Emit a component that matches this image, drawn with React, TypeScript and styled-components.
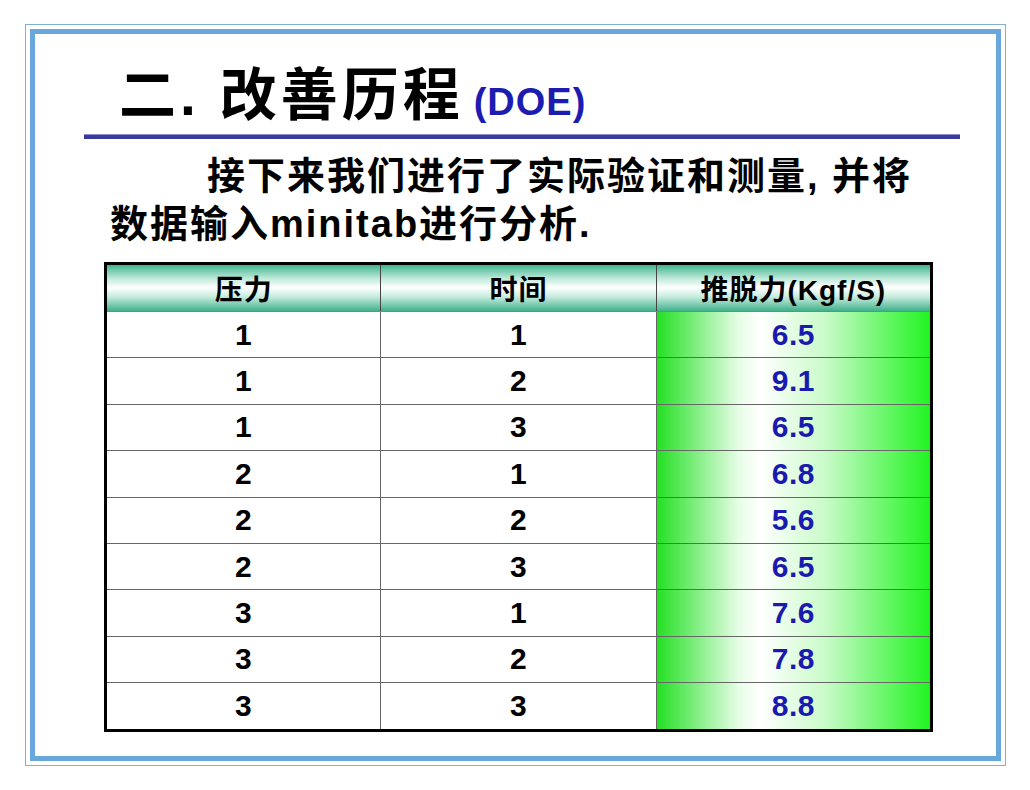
import styled, { createGlobalStyle } from "styled-components";

const GlobalStyle = createGlobalStyle`
  html, body {
    margin: 0;
    padding: 0;
    background: #ffffff;
  }
  body {
    font-family: "Liberation Sans", "Noto Sans CJK SC", sans-serif;
    color: #000;
  }
`;

const Slide = styled.div`
  width: 1030px;
  height: 790px;
  box-sizing: border-box;
  padding: 24px 24px 0 25px;
`;

const OuterFrame = styled.div`
  border: 1px solid #7fb2cf;
  padding: 4px;
  height: 742px;
  box-sizing: border-box;
`;

const InnerFrame = styled.div`
  border: 5px solid #68a8dc;
  height: 100%;
  box-sizing: border-box;
  padding: 29px 0 0 49px;
`;

const Header = styled.div`
  width: 876px;
`;

const Title = styled.h1`
  margin: 0;
  padding-left: 35px;
  height: 64px;
  line-height: 64px;
  font-size: 57px;
  font-weight: 700;
  letter-spacing: 4px;
  white-space: nowrap;
`;

const Tag = styled.span`
  font-size: 38px;
  color: #1c1cb0;
  letter-spacing: 1px;
  margin-left: 10px;
`;

const Rule = styled.div`
  margin-top: 7px;
  height: 5px;
  border-top: 1px solid #8c8cd6;
  background: #3a3a98;
  box-sizing: border-box;
`;

const Intro = styled.p`
  margin: 13px 0 0 26px;
  width: 820px;
  font-size: 38px;
  line-height: 48px;
  font-weight: 700;
  letter-spacing: 2px;
  text-indent: 97px;
`;

const Table = styled.table`
  margin: 14px 0 0 20px;
  width: 829px;
  border-collapse: collapse;
  border: 3px solid #000;
  table-layout: fixed;
`;

const HeadCell = styled.th`
  height: 46px;
  padding: 0;
  border: 1px solid #444;
  border-bottom-color: #6a8f82;
  font-size: 28px;
  font-weight: 700;
  letter-spacing: 1px;
  background: linear-gradient(
    to bottom,
    #45b790 0%,
    #bfe9da 28%,
    #ffffff 48%,
    #c6ecde 68%,
    #3aae88 100%
  );
`;

const Cell = styled.td<{ $accent?: boolean }>`
  height: 45.4px;
  padding: 0;
  border: 1px solid #666;
  text-align: center;
  font-size: 30px;
  font-weight: 700;
  letter-spacing: 0.5px;
  color: ${(p) => (p.$accent ? "#1a1aaf" : "#000")};
  background: ${(p) =>
    p.$accent
      ? "linear-gradient(to right, #22e022 0%, #e6fde6 30%, #ffffff 38%, #c8fbc8 62%, #22f422 100%)"
      : "#fff"};
`;

const rows: [number, number, string][] = [
  [1, 1, "6.5"],
  [1, 2, "9.1"],
  [1, 3, "6.5"],
  [2, 1, "6.8"],
  [2, 2, "5.6"],
  [2, 3, "6.5"],
  [3, 1, "7.6"],
  [3, 2, "7.8"],
  [3, 3, "8.8"],
];

function App() {
  return (
    <>
      <GlobalStyle />
      <Slide>
        <OuterFrame>
          <InnerFrame>
            <Header>
              <Title>
                二. 改善历程<Tag>(DOE)</Tag>
              </Title>
              <Rule />
            </Header>
            <Intro>
              接下来我们进行了实际验证和测量, 并将数据输入minitab进行分析.
            </Intro>
            <Table>
              <thead>
                <tr>
                  <HeadCell>压力</HeadCell>
                  <HeadCell>时间</HeadCell>
                  <HeadCell>推脱力(Kgf/S)</HeadCell>
                </tr>
              </thead>
              <tbody>
                {rows.map(([pressure, time, force], i) => (
                  <tr key={i}>
                    <Cell>{pressure}</Cell>
                    <Cell>{time}</Cell>
                    <Cell $accent>{force}</Cell>
                  </tr>
                ))}
              </tbody>
            </Table>
          </InnerFrame>
        </OuterFrame>
      </Slide>
    </>
  );
}

export default App;
